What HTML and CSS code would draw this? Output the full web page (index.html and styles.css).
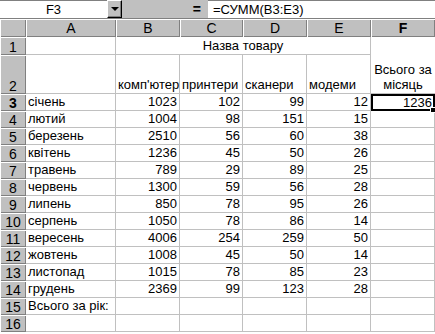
FILE: index.html
```html
<!DOCTYPE html>
<html>
<head>
<meta charset="utf-8">
<link rel="stylesheet" href="styles.css">
</head>
<body>
<div class="fbar">
  <div class="namebox">F3</div>
  <div class="drop"><span class="tri"></span></div>
  <div class="gap"><span class="eq">=</span></div>
  <div class="formula">=СУММ(B3:E3)</div>
</div>
<div class="sheet">
  <div class="hd corner"></div>
  <div class="hd col">A</div>
  <div class="hd col">B</div>
  <div class="hd col">C</div>
  <div class="hd col">D</div>
  <div class="hd col">E</div>
  <div class="hd col sel">F</div>

  <div class="hd rh r1">1</div>
  <div class="c r1"></div>
  <div class="c r1 ctr span4">Назва товару</div>
  <div class="c total">Всього за місяць</div>

  <div class="hd rh r2">2</div>
  <div class="c r2"></div>
  <div class="c r2 l">комп'ютер</div>
  <div class="c r2 l">принтери</div>
  <div class="c r2 l">сканери</div>
  <div class="c r2 l">модеми</div>

  <div class="hd rh sel">3</div><div class="c l">січень</div><div class="c n">1023</div><div class="c n">102</div><div class="c n">99</div><div class="c n">12</div><div class="c n active">1236</div>
  <div class="hd rh">4</div><div class="c l">лютий</div><div class="c n">1004</div><div class="c n">98</div><div class="c n">151</div><div class="c n">15</div><div class="c"></div>
  <div class="hd rh">5</div><div class="c l">березень</div><div class="c n">2510</div><div class="c n">56</div><div class="c n">60</div><div class="c n">38</div><div class="c"></div>
  <div class="hd rh">6</div><div class="c l">квітень</div><div class="c n">1236</div><div class="c n">45</div><div class="c n">50</div><div class="c n">26</div><div class="c"></div>
  <div class="hd rh">7</div><div class="c l">травень</div><div class="c n">789</div><div class="c n">29</div><div class="c n">89</div><div class="c n">25</div><div class="c"></div>
  <div class="hd rh">8</div><div class="c l">червень</div><div class="c n">1300</div><div class="c n">59</div><div class="c n">56</div><div class="c n">28</div><div class="c"></div>
  <div class="hd rh">9</div><div class="c l">липень</div><div class="c n">850</div><div class="c n">78</div><div class="c n">95</div><div class="c n">26</div><div class="c"></div>
  <div class="hd rh">10</div><div class="c l">серпень</div><div class="c n">1050</div><div class="c n">78</div><div class="c n">86</div><div class="c n">14</div><div class="c"></div>
  <div class="hd rh">11</div><div class="c l">вересень</div><div class="c n">4006</div><div class="c n">254</div><div class="c n">259</div><div class="c n">50</div><div class="c"></div>
  <div class="hd rh">12</div><div class="c l">жовтень</div><div class="c n">1008</div><div class="c n">45</div><div class="c n">50</div><div class="c n">14</div><div class="c"></div>
  <div class="hd rh">13</div><div class="c l">листопад</div><div class="c n">1015</div><div class="c n">78</div><div class="c n">85</div><div class="c n">23</div><div class="c"></div>
  <div class="hd rh">14</div><div class="c l">грудень</div><div class="c n">2369</div><div class="c n">99</div><div class="c n">123</div><div class="c n">28</div><div class="c"></div>
  <div class="hd rh">15</div><div class="c l">Всього за рік:</div><div class="c"></div><div class="c"></div><div class="c"></div><div class="c"></div><div class="c"></div>
  <div class="hd rh">16</div><div class="c"></div><div class="c"></div><div class="c"></div><div class="c"></div><div class="c"></div><div class="c"></div>
</div>
</body>
</html>
```
FILE: styles.css
```css
html, body {
  margin: 0;
  padding: 0;
  background: #fff;
  overflow: hidden;
  width: 435px;
  height: 334px;
  font-family: "Liberation Sans", Arial, sans-serif;
  font-size: 13px;
  color: #000;
}

.fbar {
  display: flex;
  height: 18px;
  background: #c0c0c0;
  border-bottom: 1px solid #808080;
}
.namebox {
  width: 107px;
  background: #fff;
  text-align: center;
  line-height: 18px;
  box-sizing: border-box;
  border-top: 1px solid #808080;
}
.drop {
  width: 15px;
  box-sizing: border-box;
  background: #c0c0c0;
  border-top: 1px solid #fff;
  border-left: 1px solid #fff;
  border-right: 1px solid #000;
  border-bottom: 1px solid #000;
  box-shadow: inset -1px -1px 0 #808080;
  display: flex;
  align-items: center;
  justify-content: center;
}
.tri {
  width: 0;
  height: 0;
  border-left: 4px solid transparent;
  border-right: 4px solid transparent;
  border-top: 4px solid #000;
}
.gap {
  width: 86px;
  display: flex;
  justify-content: flex-end;
  align-items: center;
  padding-right: 7px;
  box-sizing: border-box;
}
.eq {
  font-weight: bold;
  font-size: 14px;
  line-height: 18px;
}
.formula {
  flex: 1;
  background: #fff;
  line-height: 18px;
  padding-left: 5px;
  border-top: 1px solid #808080;
  box-sizing: border-box;
}

.sheet {
  display: grid;
  grid-template-columns: 26px 90px 64px 63px 64px 64px 64px;
  grid-template-rows: 18px 18px 39px repeat(14, 17px);
}
.hd {
  background: #c0c0c0;
  box-shadow: inset 1px 1px 0 #fff, inset -1px -1px 0 #808080;
  display: flex;
  align-items: center;
  justify-content: center;
  line-height: 14px;
}
.col { font-size: 14px; }
.rh { font-size: 14px; align-items: flex-end; padding-bottom: 1px; }
.sel { font-weight: bold; }
.c {
  border-right: 1px solid #c0c0c0;
  border-bottom: 1px solid #c0c0c0;
  box-sizing: border-box;
  display: flex;
  align-items: flex-end;
  padding: 0 2px 1px 2px;
  line-height: 15px;
  white-space: nowrap;
}
.l { justify-content: flex-start; }
.n { justify-content: flex-end; }
.ctr { justify-content: center; }
.span4 { grid-column: span 4; }
.total {
  grid-row: span 2;
  flex-direction: column;
  justify-content: flex-end;
  align-items: center;
  text-align: center;
  white-space: normal;
  border-right: none;
}
.active {
  position: relative;
  border: none;
  box-shadow: inset 0 0 0 2px #000;
  padding-right: 3px;
}
.active::after {
  content: "";
  position: absolute;
  right: -1px;
  bottom: -2px;
  width: 4px;
  height: 4px;
  background: #000;
  border: 1px solid #fff;
}
```
